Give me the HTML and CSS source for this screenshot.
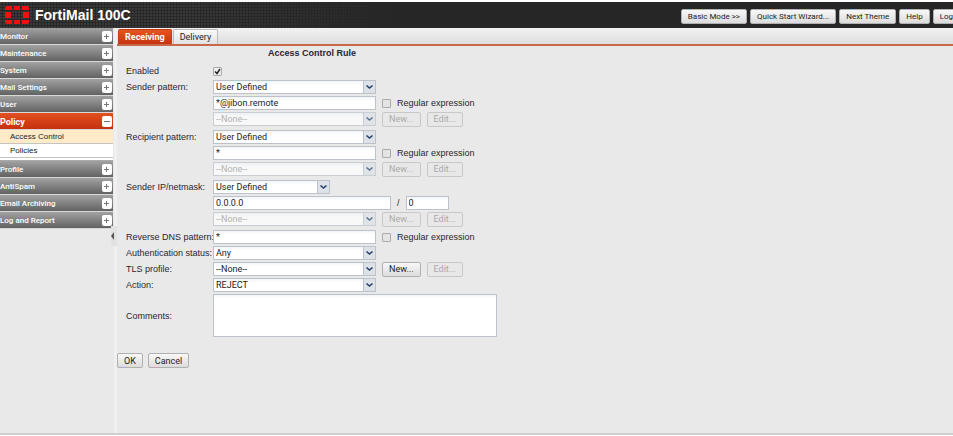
FILE: index.html
```html
<!DOCTYPE html>
<html lang="en">
<head>
    <meta charset="UTF-8">
    <title>FortiMail 100C</title>
    <meta name="viewport" content="width=device-width, initial-scale=1.0">
    <link rel="stylesheet" href="styles.css">
</head>
<body>
<header class="topbar">
    <svg class="logo" width="24" height="18" viewBox="0 0 24 18" fill="#f01010" aria-hidden="true">
        <path d="M2 0h5v4H0V2a2 2 0 0 1 2-2zM9 0h6v4H9zM17 0h5a2 2 0 0 1 2 2v2h-7zM0 6h6v6H0zM18 6h6v6h-6zM0 14h7v4H2a2 2 0 0 1-2-2zM9 14h6v4H9zM17 14h7v2a2 2 0 0 1-2 2h-5z"/>
    </svg>
    <h1>FortiMail 100C</h1>
    <nav class="actions">
        <button class="btn" type="button">Basic Mode &gt;&gt;</button>
        <button class="btn" type="button">Quick Start Wizard...</button>
        <button class="btn" type="button">Next Theme</button>
        <button class="btn" type="button">Help</button>
        <button class="btn" type="button">Log</button>
    </nav>
</header>
<div class="layout">
    <aside class="sidebar">
        <button class="menu" type="button">Monitor<span class="toggle"></span></button>
        <button class="menu" type="button">Maintenance<span class="toggle"></span></button>
        <button class="menu" type="button">System<span class="toggle"></span></button>
        <button class="menu" type="button">Mail Settings<span class="toggle"></span></button>
        <button class="menu" type="button">User<span class="toggle"></span></button>
        <button class="menu open" type="button">Policy<span class="toggle"></span></button>
        <div class="submenu">
            <a class="current" href="#access">Access Control</a>
            <a href="#policies">Policies</a>
        </div>
        <button class="menu" type="button">Profile<span class="toggle"></span></button>
        <button class="menu" type="button">AntiSpam<span class="toggle"></span></button>
        <button class="menu" type="button">Email Archiving<span class="toggle"></span></button>
        <button class="menu" type="button">Log and Report<span class="toggle"></span></button>
        <button class="collapse" type="button" aria-label="Collapse menu"></button>
    </aside>
    <main class="content">
        <div class="tabs">
            <button class="tab active" type="button">Receiving</button>
            <button class="tab" type="button">Delivery</button>
        </div>
        <form class="rule">
            <h2>Access Control Rule</h2>
            <div class="fields">
                <label for="enabled">Enabled</label>
                <div class="row"><input class="check" type="checkbox" id="enabled" checked></div>

                <label for="sender">Sender pattern:</label>
                <div class="group">
                    <div class="row"><select class="wide" id="sender"><option>User Defined</option></select></div>
                    <div class="row">
                        <input class="wide" type="text" value="*@jibon.remote" aria-label="Sender value">
                        <input class="check" type="checkbox" id="senderRegex"><label for="senderRegex">Regular expression</label>
                    </div>
                    <div class="row">
                        <select class="wide" aria-label="Sender group" disabled><option>--None--</option></select>
                        <button class="btn" type="button" disabled>New...</button>
                        <button class="btn" type="button" disabled>Edit...</button>
                    </div>
                </div>

                <label for="recipient">Recipient pattern:</label>
                <div class="group">
                    <div class="row"><select class="wide" id="recipient"><option>User Defined</option></select></div>
                    <div class="row">
                        <input class="wide" type="text" value="*" aria-label="Recipient value">
                        <input class="check" type="checkbox" id="recipientRegex"><label for="recipientRegex">Regular expression</label>
                    </div>
                    <div class="row">
                        <select class="wide" aria-label="Recipient group" disabled><option>--None--</option></select>
                        <button class="btn" type="button" disabled>New...</button>
                        <button class="btn" type="button" disabled>Edit...</button>
                    </div>
                </div>

                <label for="netmask">Sender IP/netmask:</label>
                <div class="group">
                    <div class="row"><select class="medium" id="netmask"><option>User Defined</option></select></div>
                    <div class="row">
                        <input class="address" type="text" value="0.0.0.0" aria-label="IP address">
                        <span>/</span>
                        <input class="mask" type="text" value="0" aria-label="Netmask">
                    </div>
                    <div class="row">
                        <select class="wide" aria-label="IP group" disabled><option>--None--</option></select>
                        <button class="btn" type="button" disabled>New...</button>
                        <button class="btn" type="button" disabled>Edit...</button>
                    </div>
                </div>

                <label for="dns">Reverse DNS pattern:</label>
                <div class="row">
                    <input class="wide" type="text" id="dns" value="*">
                    <input class="check" type="checkbox" id="dnsRegex"><label for="dnsRegex">Regular expression</label>
                </div>

                <label for="auth">Authentication status:</label>
                <div class="row"><select class="wide" id="auth"><option>Any</option></select></div>

                <label for="tls">TLS profile:</label>
                <div class="row">
                    <select class="wide" id="tls"><option>--None--</option></select>
                    <button class="btn" type="button">New...</button>
                    <button class="btn" type="button" disabled>Edit...</button>
                </div>

                <label for="action">Action:</label>
                <div class="row"><select class="wide" id="action"><option>REJECT</option></select></div>

                <label class="middle" for="comments">Comments:</label>
                <textarea id="comments"></textarea>
            </div>
            <div class="buttons">
                <button class="btn" type="button">OK</button>
                <button class="btn" type="button">Cancel</button>
            </div>
        </form>
    </main>
</div>
</body>
</html>
```
FILE: styles.css
```css
* {
    box-sizing: border-box;
}
html, body {
    height: 100%;
    margin: 0;
}
body {
    display: flex;
    flex-direction: column;
    padding: 2px 0 1px;
    background: #fff;
    color: #2b2530;
    font: 9px/14px "Liberation Sans", Arial, sans-serif;
}
button, input, select, textarea {
    margin: 0;
    color: #222;
    font: 9px/12px Roboto, Tahoma, sans-serif;
}

/* top bar */
.topbar {
    display: flex;
    align-items: center;
    flex: none;
    height: 26px;
    padding-left: 5px;
    overflow: hidden;
    background-color: #3a3a3a;
    background-image: linear-gradient(90deg, transparent 180px, #262626 400px),
        repeating-linear-gradient(0deg, transparent 0 2px, #282828 2px 3px),
        repeating-linear-gradient(90deg, transparent 0 2px, #282828 2px 3px);
}
.topbar h1 {
    flex: 1;
    margin: 0 0 0 6px;
    color: #fff;
    font-size: 14px;
    line-height: 20px;
    white-space: nowrap;
}
.actions {
    display: flex;
    gap: 3px;
    margin: 3px -7px 0 0;
}
.btn {
    height: 15px;
    padding: 0 6px;
    border: 1px solid #b0b0b0;
    border-radius: 2px;
    background: linear-gradient(#f8f8f8, #dcdcdc);
    white-space: nowrap;
}
.actions .btn {
    font-size: 8px;
}
.btn:disabled {
    border-color: #c8c8c8;
    background: #e8e8e8;
    color: #a8a8a8;
}

/* side menu */
.layout {
    display: flex;
    flex: 1;
    border-bottom: 2px solid #cfcfcf;
    background: #e9e9e9;
}
.sidebar {
    position: relative;
    display: flex;
    flex-direction: column;
    flex: none;
    width: 117px;
    padding-right: 1px;
    border-right: 3px solid #f0f0f0;
}
.menu {
    display: flex;
    align-items: center;
    justify-content: space-between;
    height: 17px;
    padding: 1px 1px 0 0;
    border: 0;
    border-bottom: 1px solid #d8d8d8;
    background: linear-gradient(#a2a2a2, #626262);
    color: #fff;
    font-size: 8px;
    font-weight: 500;
}
.menu.open {
    background: linear-gradient(#e2511f, #c5300f);
    font-size: 9px;
    font-weight: bold;
}
.toggle {
    width: 10px;
    height: 11px;
    border-radius: 2px;
    background: linear-gradient(#777, #777) 2px 5px / 5px 1px no-repeat,
        linear-gradient(#777, #777) 4px 3px / 1px 5px no-repeat, #fff;
}
.open .toggle {
    background: linear-gradient(#777, #777) 2px 5px / 6px 1px no-repeat, #fff;
}
.submenu {
    display: flex;
    flex-direction: column;
    padding-bottom: 2px;
    border-bottom: 1px solid #aaa;
    background: #fff;
}
.submenu a {
    padding-left: 10px;
    border-bottom: 1px solid #c4c4c4;
    color: #222;
    font-size: 8px;
    line-height: 13px;
    text-decoration: none;
}
.submenu .current {
    background: #ffebc8;
}
.collapse {
    position: absolute;
    top: 198px;
    right: -3px;
    display: flex;
    align-items: center;
    width: 6px;
    height: 20px;
    padding: 0;
    border: 0;
    background: #e2e2e2;
}
.collapse::before {
    content: "";
    border: 4px solid transparent;
    border-left: 0;
    border-right: 3px solid #555;
}

/* tabs */
.content {
    flex: 1;
    min-width: 0;
}
.tabs {
    display: flex;
    gap: 1px;
    height: 18px;
    padding: 1px 0 0 1px;
    border-bottom: 2px solid #c8684a;
    background: linear-gradient(#f2f2f2, #dedede);
}
.tab {
    padding: 0 6px;
    border: 1px solid #bbb;
    border-bottom: 0;
    border-radius: 2px 2px 0 0;
    background: linear-gradient(#fafafa, #e2e2e2);
}
.tab.active {
    border-color: #c83c14;
    background: linear-gradient(#e4561f, #c5330f);
    color: #fff;
    font-weight: bold;
}

/* rule form */
.rule h2 {
    width: 390px;
    margin: 0;
    font-size: 9px;
    line-height: 14px;
    text-align: center;
}
.fields {
    display: grid;
    grid-template-columns: 87px 1fr;
    gap: 2px 0;
    padding: 4px 9px 0;
}
.group {
    display: grid;
    gap: 2px;
    padding-bottom: 2px;
}
.row {
    display: flex;
    align-items: center;
    gap: 6px;
    height: 14px;
}
label {
    white-space: nowrap;
}
.middle {
    align-self: center;
}
input[type="text"], select, textarea {
    height: 14px;
    padding: 0 2px;
    border: 1px solid #bcc2cc;
    border-radius: 0;
    background: linear-gradient(#f2f5f7, #fff 4px);
}
select {
    appearance: none;
    background: url("data:image/svg+xml,%3Csvg xmlns='http://www.w3.org/2000/svg' width='12' height='12'%3E%3Cpath d='M0 0h12v12H0z' fill='%23dde1e8'/%3E%3Cpath d='M.5 0v12' stroke='%23bcc2cc'/%3E%3Cpath d='M3.500 4.500l3 2.500 3-2.500' fill='none' stroke='%23244068' stroke-width='1.600'/%3E%3C/svg%3E") right / 12px 12px no-repeat, linear-gradient(#f2f5f7, #fff 4px);
}
select:disabled {
    color: #999;
    opacity: 0.7;
}
.wide {
    width: 163px;
}
.medium {
    width: 117px;
}
.address {
    width: 178px;
}
.mask {
    width: 43px;
}
.check {
    appearance: none;
    width: 9px;
    height: 9px;
    border: 1px solid #aaa;
    border-radius: 1px;
    background: #e4e4e4;
}
.check:checked {
    background: url("data:image/svg+xml,%3Csvg xmlns='http://www.w3.org/2000/svg' viewBox='0 0 7 7'%3E%3Cpath d='M1 3.500l2 2L6 1' fill='none' stroke='%23222' stroke-width='1.500'/%3E%3C/svg%3E") center / 7px 7px no-repeat #eee;
}
textarea {
    display: block;
    width: 284px;
    height: 43px;
    resize: none;
}
.buttons {
    display: flex;
    gap: 5px;
    padding-top: 16px;
}
```
